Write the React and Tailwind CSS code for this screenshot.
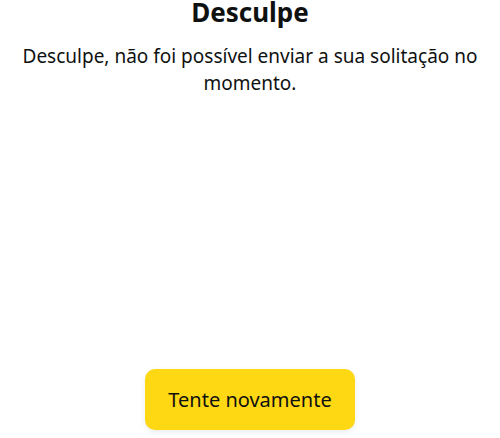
export default function App() {
  return (
    <div
      className="flex h-[438px] w-[500px] flex-col items-center bg-white text-[#0f1111]"
      style={{ fontFamily: '"Noto Sans", "Open Sans", sans-serif' }}
    >
      <h1 className="mt-[-6px] text-[26px] font-bold leading-[36px]">Desculpe</h1>
      <p className="mt-[13px] px-[16px] text-center text-[19px] leading-[27px]">
        Desculpe, não foi possível enviar a sua solitação no momento.
      </p>
      <div className="flex-1" />
      <button className="mb-[8px] h-[61px] w-[210px] rounded-[10px] bg-[#ffd814] text-[20px] shadow-[0_2px_5px_rgba(213,217,217,0.5)]">
        Tente novamente
      </button>
    </div>
  );
}
